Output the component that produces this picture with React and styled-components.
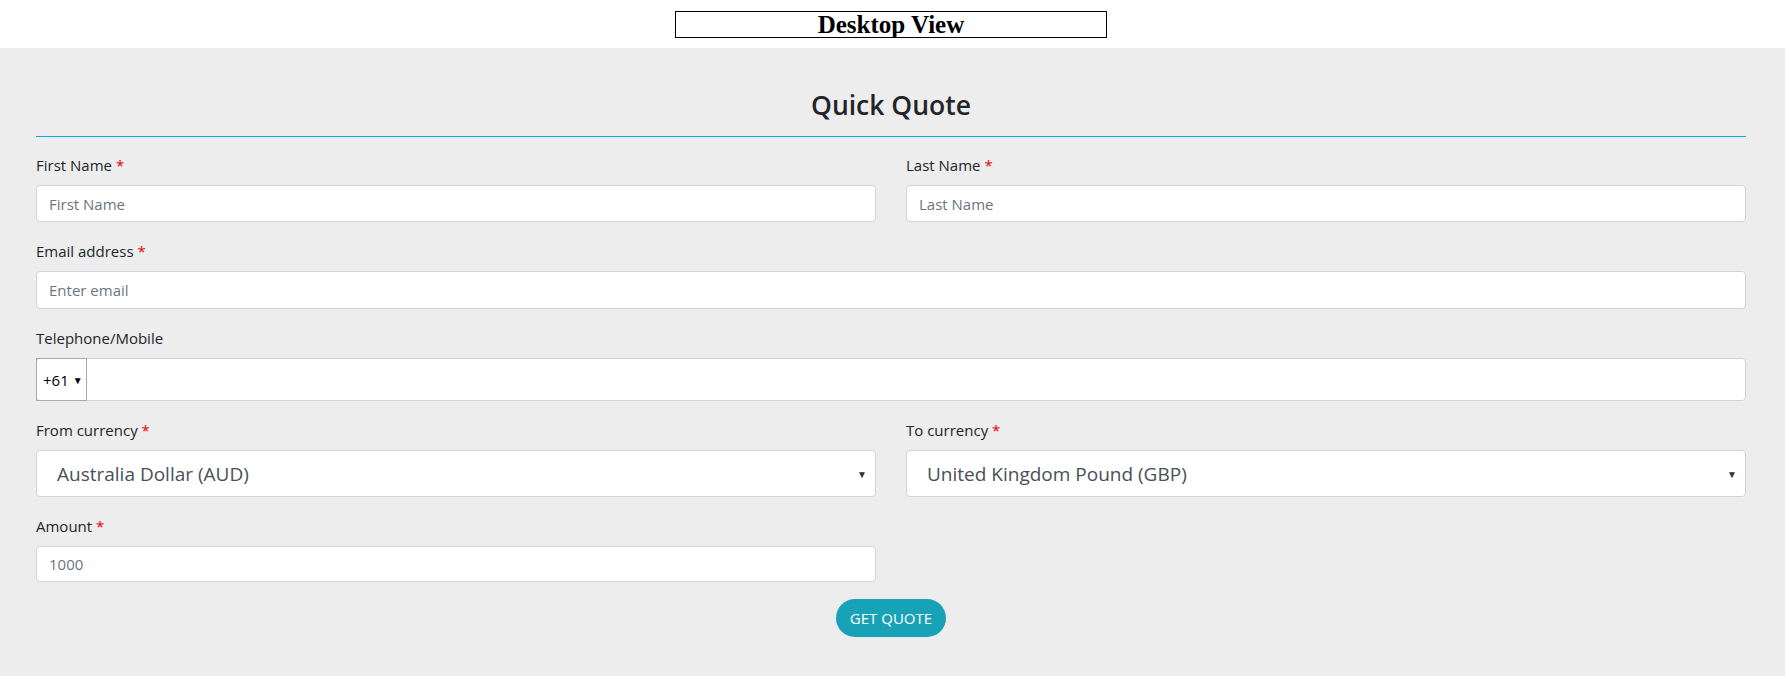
import React from 'react';
import styled, { createGlobalStyle } from 'styled-components';

const GlobalStyle = createGlobalStyle`
	* { box-sizing: border-box; }
	body {
		margin: 0;
		background: #fff;
		font-family: 'Open Sans', 'Noto Sans', sans-serif;
	}
`;

const TopBar = styled.div`
	height: 48px;
	display: flex;
	justify-content: center;
	padding: 11px 7px 0 0;
`;

const ViewTag = styled.div`
	width: 432px;
	height: 27px;
	border: 1px solid #000;
	font-family: 'Liberation Serif', serif;
	font-weight: bold;
	font-size: 25px;
	line-height: 26px;
	text-align: center;
	color: #000;
`;

const Section = styled.section`
	background: #ededed;
	margin-right: 4px;
	padding: 37px 39px 39px 36px;
	color: #212529;
`;

const Title = styled.h2`
	margin: 0;
	font-size: 26.5px;
	font-weight: 600;
	line-height: 40px;
	text-align: center;
	padding-bottom: 11px;
	border-bottom: 1px solid #00aeef;
	margin-bottom: 18px;
`;

const Row = styled.div`
	display: grid;
	grid-template-columns: ${({ cols }) => (cols === 1 ? '1fr' : '1fr 1fr')};
	column-gap: 30px;
`;

const Group = styled.div`
	margin-bottom: 19px;
`;

const Label = styled.label`
	display: block;
	font-size: 15px;
	line-height: 21px;
	margin-bottom: 9px;
	span {
		color: #e00;
	}
`;

const Input = styled.input`
	display: block;
	width: 100%;
	height: ${({ h }) => h || 37}px;
	padding: 0 12px;
	font-family: inherit;
	font-size: 15px;
	color: #495057;
	background: #fff;
	border: 1px solid #ced4da;
	border-radius: 4px;
	&::placeholder {
		color: #6c757d;
	}
`;

const PhoneBox = styled.div`
	display: flex;
	height: 43px;
	background: #fff;
	border: 1px solid #ced4da;
	border-radius: 4px;
`;

const CountryCode = styled.div`
	width: 51px;
	display: flex;
	align-items: center;
	gap: 4px;
	padding-left: 6px;
	border: 1px solid #aaa;
	margin: -1px 0 -1px -1px;
	font-size: 15px;
	color: #000;
	i {
		font-style: normal;
		font-size: 10px;
	}
`;

const Select = styled.div`
	height: 47px;
	display: flex;
	align-items: center;
	justify-content: space-between;
	padding: 0 8px 0 20px;
	background: #fff;
	border: 1px solid #ced4da;
	border-radius: 4px;
	font-size: 19px;
	color: #495057;
	i {
		font-style: normal;
		font-size: 10px;
		color: #333;
	}
`;

const Actions = styled.div`
	display: flex;
	justify-content: center;
	margin-top: -2px;
`;

const Button = styled.button`
	width: 110px;
	height: 38px;
	border: none;
	border-radius: 19px;
	background: #17a2b8;
	color: #fff;
	font-family: inherit;
	font-size: 15px;
	text-transform: uppercase;
`;

const Req = () => <span>*</span>;

export default function App() {
	return (
		<>
			<GlobalStyle />
			<TopBar>
				<ViewTag>Desktop View</ViewTag>
			</TopBar>
			<Section>
				<Title>Quick Quote</Title>
				<Row>
					<Group>
						<Label>First Name <Req /></Label>
						<Input placeholder="First Name" />
					</Group>
					<Group>
						<Label>Last Name <Req /></Label>
						<Input placeholder="Last Name" />
					</Group>
				</Row>
				<Row cols={1}>
					<Group>
						<Label>Email address <Req /></Label>
						<Input h={38} placeholder="Enter email" />
					</Group>
					<Group>
						<Label>Telephone/Mobile</Label>
						<PhoneBox>
							<CountryCode>+61 <i>▼</i></CountryCode>
						</PhoneBox>
					</Group>
				</Row>
				<Row>
					<Group>
						<Label>From currency <Req /></Label>
						<Select>Australia Dollar (AUD) <i>▼</i></Select>
					</Group>
					<Group>
						<Label>To currency <Req /></Label>
						<Select>United Kingdom Pound (GBP) <i>▼</i></Select>
					</Group>
				</Row>
				<Row>
					<Group>
						<Label>Amount <Req /></Label>
						<Input h={36} placeholder="1000" />
					</Group>
				</Row>
				<Actions>
					<Button>Get Quote</Button>
				</Actions>
			</Section>
		</>
	);
}
